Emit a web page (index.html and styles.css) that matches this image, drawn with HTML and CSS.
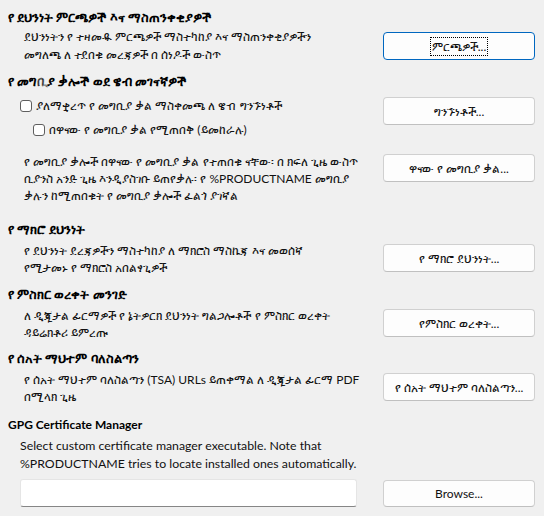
FILE: index.html
```html
<!DOCTYPE html>
<html lang="am">
<head>
<meta charset="utf-8">
<link rel="stylesheet" href="styles.css">
</head>
<body>
<div class="page">
  <section class="sec s1">
    <h2 class="head am">የ ደህንነት ምርጫዎች እና ማስጠንቀቂያዎች</h2>
    <div class="row">
      <p class="desc">ደህንነትን የ ተዛመዱ ምርጫዎች ማስተካከያ እና ማስጠንቀቂያዎችን<br>መግለጫ ለ ተደበቁ መረጃዎች በ ሰነዶች ውስጥ</p>
      <button class="btn focus"><span class="ring">ምርጫዎች...</span></button>
    </div>
  </section>

  <section class="sec s2">
    <h2 class="head am">የ መግቢያ ቃሎች ወደ ዌብ መገናኛዎች</h2>
    <div class="row">
      <div class="checks">
        <label class="check"><span class="box"></span><span>ያለማቋረጥ የ መግቢያ ቃል ማስቀመጫ ለ ዌብ ግንኙነቶች</span></label>
        <label class="check sub"><span class="box"></span><span>በዋናው የ መግቢያ ቃል የሚጠበቅ (ይመከራሉ)</span></label>
      </div>
      <button class="btn">ግንኙነቶች...</button>
    </div>
    <div class="row r2">
      <p class="desc tight">የ መግቢያ ቃሎች በዋናው የ መግቢያ ቃል የተጠበቁ ናቸው፡ በ ክፍለ ጊዜ ውስጥ<br>ቢያንስ አንድ ጊዜ እንዲያስገቡ ይጠየቃሉ፡ የ %PRODUCTNAME መግቢያ<br>ቃሉን ከሚጠበቁት የ መግቢያ ቃሎች ፈልጎ ያገኛል</p>
      <button class="btn">ዋናው የ መግቢያ ቃል...</button>
    </div>
  </section>

  <section class="sec s3">
    <h2 class="head am">የ ማክሮ ደህንነት</h2>
    <div class="row">
      <p class="desc tight">የ ደህንነት ደረጃዎችን ማስተካከያ ለ ማክሮስ ማስኬጃ እና መወሰኛ<br>የሚታመኑ የ ማክሮስ አበልፃጊዎች</p>
      <button class="btn">የ ማክሮ ደህንነት...</button>
    </div>
  </section>

  <section class="sec s4">
    <h2 class="head am">የ ምስክር ወረቀት መንገድ</h2>
    <div class="row">
      <p class="desc tight">ለ ዲጂታል ፊርማዎች የ ኔትዎርክ ደህንነት ግልጋሎቶች የ ምስክር ወረቀት<br>ዳይሬክቶሪ ይምረጡ</p>
      <button class="btn">የምስክር ወረቀት...</button>
    </div>
  </section>

  <section class="sec s5">
    <h2 class="head am">የ ሰአት ማህተም ባለስልጣን</h2>
    <div class="row">
      <p class="desc tight">የ ሰአት ማህተም ባለስልጣን (TSA) URLs ይጠቀማል ለ ዲጂታል ፊርማ PDF<br>በሚላክ ጊዜ</p>
      <button class="btn">የ ሰአት ማህተም ባለስልጣን...</button>
    </div>
  </section>

  <section class="sec s6">
    <h2 class="head">GPG Certificate Manager</h2>
    <p class="desc full">Select custom certificate manager executable. Note that<br>%PRODUCTNAME tries to locate installed ones automatically.</p>
    <div class="row input-row">
      <input class="field" type="text">
      <button class="btn">Browse...</button>
    </div>
  </section>
</div>
</body>
</html>
```

FILE: styles.css
```css
html, body {
  margin: 0;
  padding: 0;
  background: #f0f0f0;
}
body {
  font-family: "Lato", "Noto Sans", "DejaVu Sans", sans-serif;
  font-size: 12px;
  color: #111;
}
.page {
  width: 544px;
  height: 516px;
  padding: 8px 9px 0 8px;
  box-sizing: border-box;
  overflow: hidden;
}
.head {
  margin: 0;
  font-size: 12px;
  font-weight: bold;
  line-height: 18px;
  color: #000;
  white-space: nowrap;
}
.head.am {
  font-size: 13.3px;
}
.row {
  display: grid;
  grid-template-columns: minmax(0, 1fr) 152px;
  column-gap: 12px;
  align-items: start;
  padding-left: 16px;
}
.desc {
  margin: 0;
  line-height: 18px;
  white-space: nowrap;
}
.desc.tight {
  line-height: 17px;
}
.btn {
  font-family: inherit;
  font-size: 12px;
  color: #111;
  height: 28px;
  background: #fdfdfd;
  border: 1px solid #d0d0d0;
  border-bottom-color: #c0c0c0;
  border-radius: 4px;
  padding: 0 4px;
  white-space: nowrap;
  overflow: hidden;
  display: flex;
  align-items: center;
  justify-content: center;
}
.btn.focus {
  border-color: #0067c0;
}
.ring {
  outline: 1px dotted #000;
  padding: 1px 1px;
  line-height: 15px;
}
.s1 .row { margin-top: 2px; }
.s1 .btn { margin-top: 4px; }
.s2 { margin-top: 8px; }
.s2 .row { margin-top: 7px; }
.checks {
  display: flex;
  flex-direction: column;
  gap: 6px;
  margin-left: -4px;
}
.check {
  display: flex;
  align-items: center;
  gap: 4px;
  line-height: 18px;
  white-space: nowrap;
}
.check.sub { margin-left: 13px; }
.box {
  width: 12px;
  height: 12px;
  border: 1px solid #5f5f5f;
  border-radius: 3px;
  background: #fff;
  box-sizing: border-box;
  flex: none;
}
.s2 .row.r2 { margin-top: 14px; }
.r2 .btn { margin-top: 1px; }
.s3 { margin-top: 16px; }
.s3 .row, .s4 .row, .s5 .row { margin-top: 4px; }
.s3 .btn, .s4 .btn, .s5 .btn { margin-top: 2px; }
.s4 { margin-top: 9px; }
.s5 { margin-top: 8px; }
.s6 { margin-top: 11px; }
.desc.full {
  margin-top: 3px;
  padding-left: 12px;
  font-size: 12.3px;
}
.input-row {
  margin-top: 6px;
  padding-left: 12px;
  column-gap: 26px;
  align-items: center;
}
.field {
  height: 28px;
  box-sizing: border-box;
  background: #fff;
  border: 1px solid #e5e5e5;
  border-bottom: 1px solid #868686;
  border-radius: 3px;
  width: 100%;
  font: inherit;
}
.input-row .btn { height: 27px; }
```
